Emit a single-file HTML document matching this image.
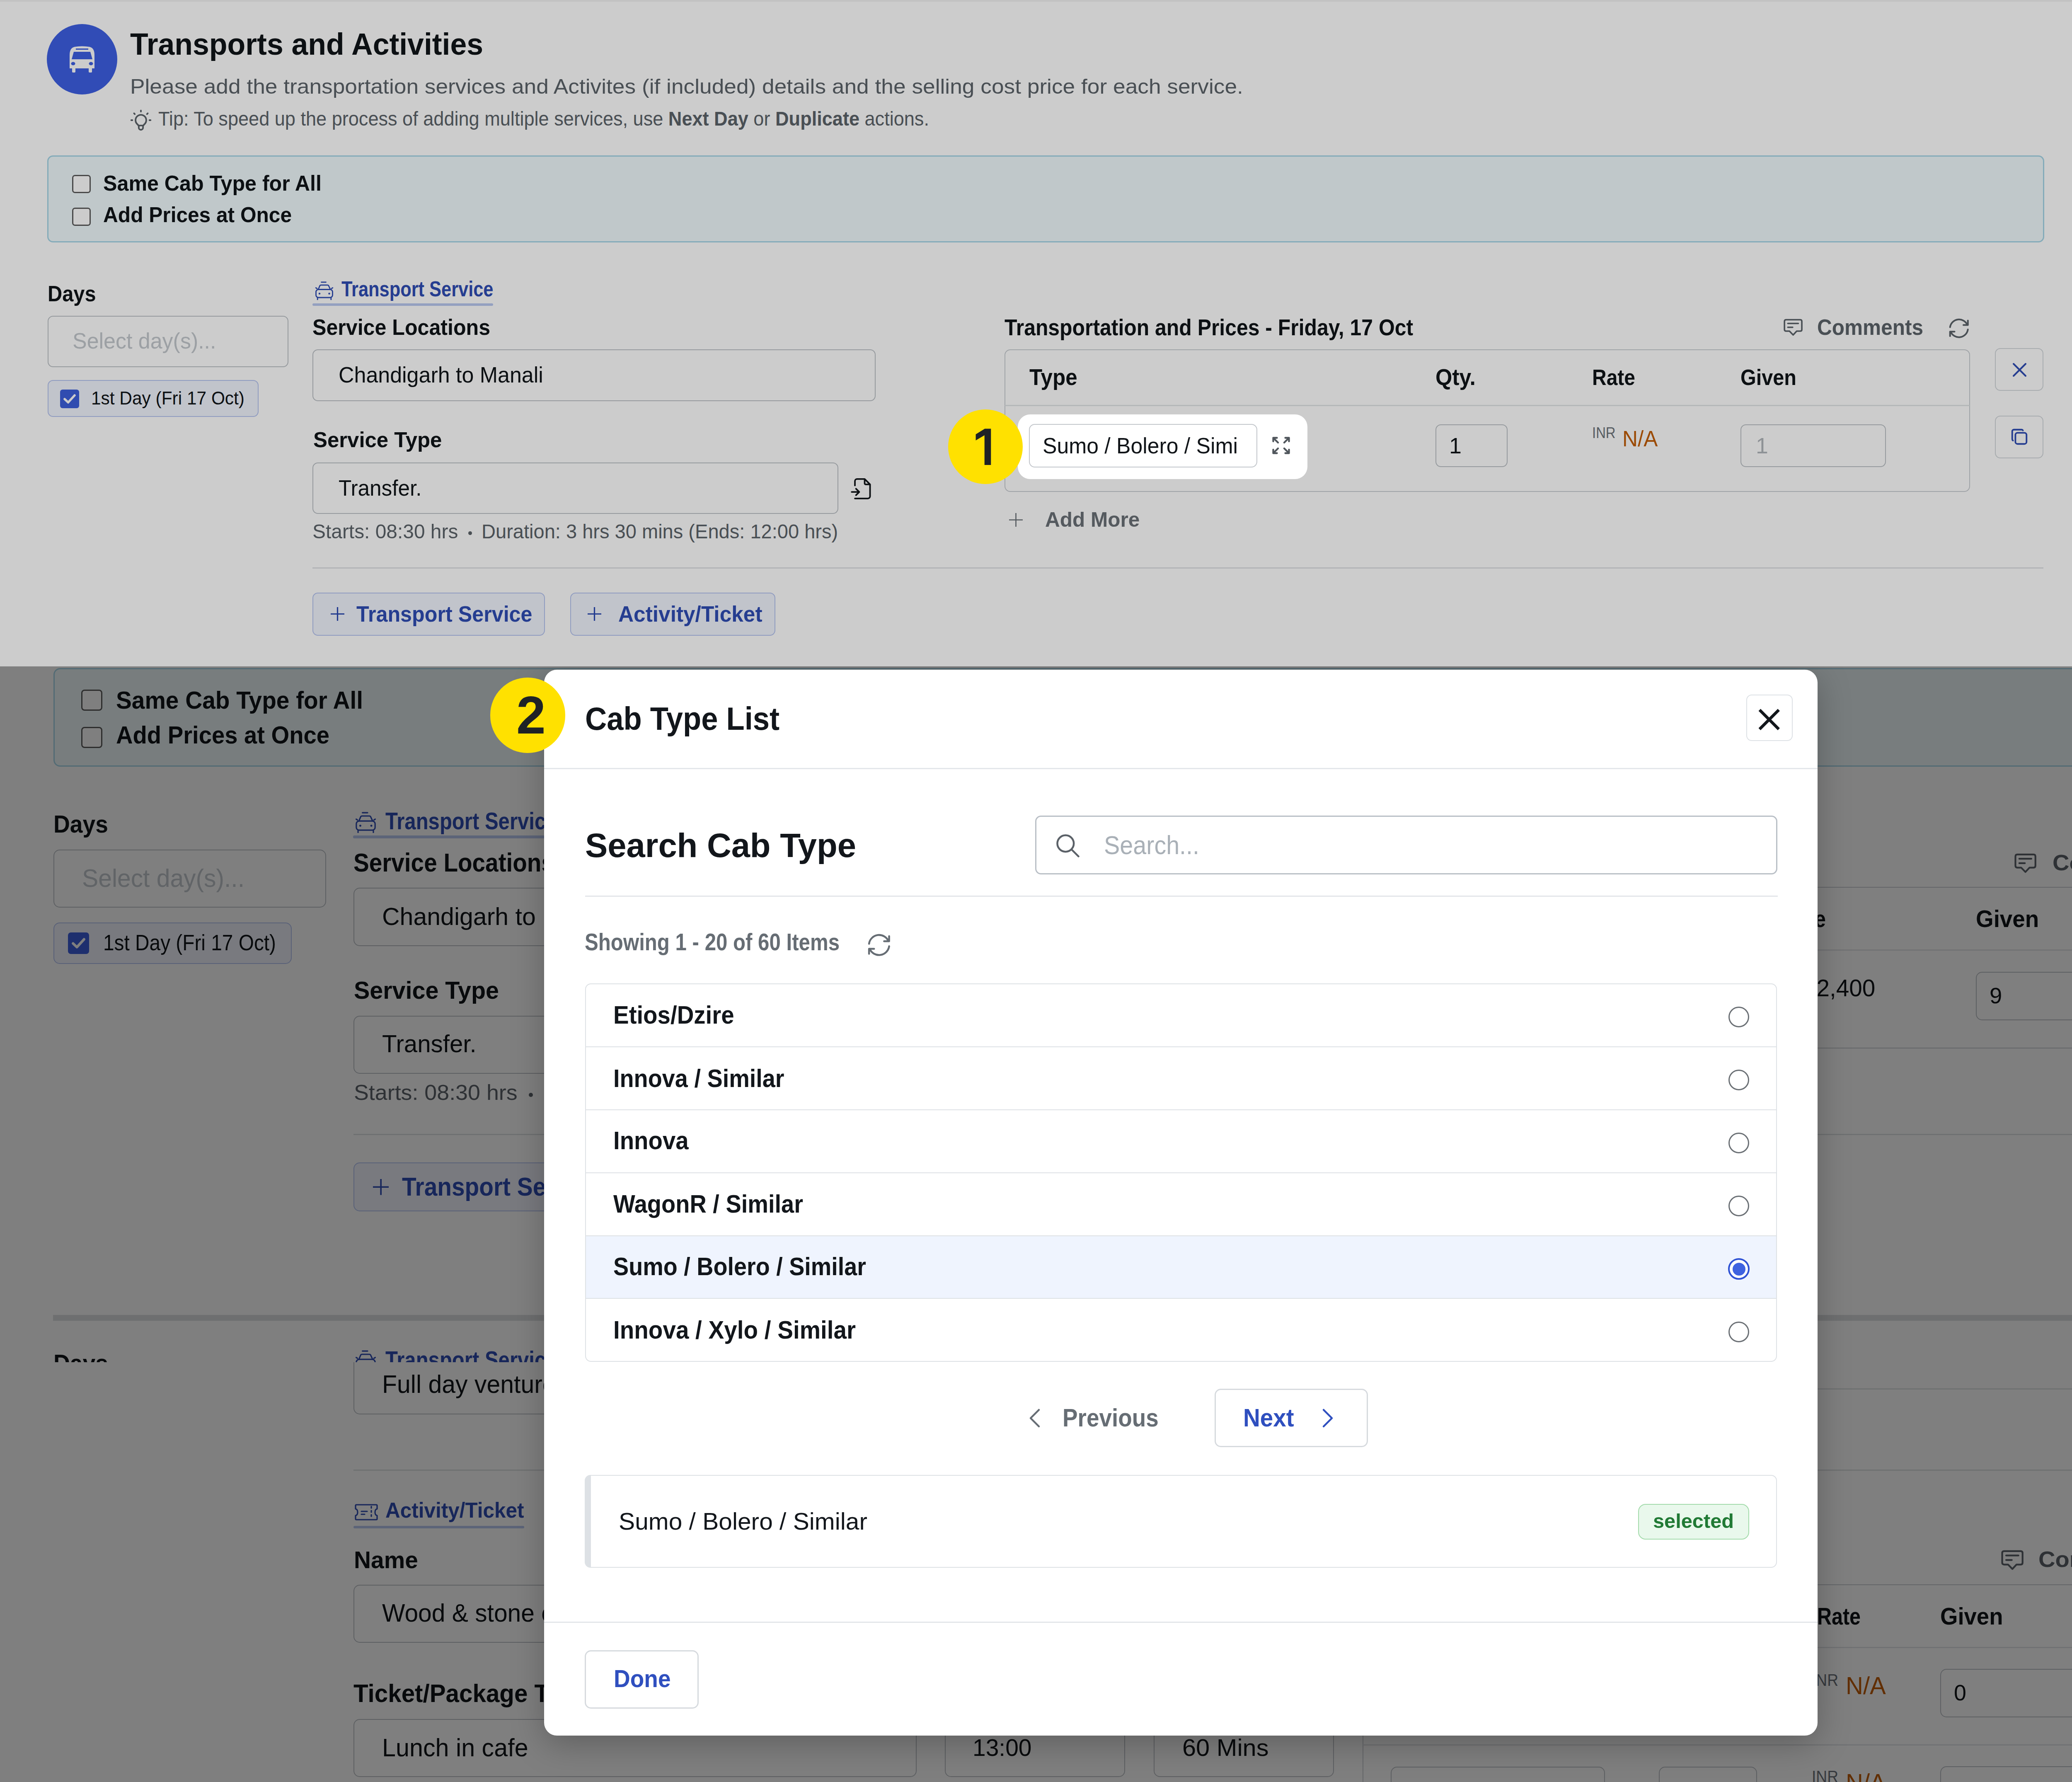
<!DOCTYPE html>
<html><head><meta charset="utf-8"><style>*{margin:0;padding:0;box-sizing:border-box}
html,body{width:5036px;height:4300px;overflow:hidden;background:#fff}
body{position:relative;font-family:"Liberation Sans",sans-serif}
.a{position:absolute}
.t{white-space:nowrap;transform-origin:0 0}
b{font-weight:700}
</style></head><body>
<div class="a" style="left:0;top:0;width:5036px;height:1608px;background:#fff;overflow:hidden">
<div class="a" style="left:0;top:0;width:5036px;height:4px;background:#f3f3f3"></div>
<div class="a" style="left:113px;top:58px;width:170px;height:170px;background:#3e60e4;border-radius:85px;"></div>
<svg class="a" style="left:166px;top:111px;width:64px;height:64px;" viewBox="0 0 64 64" fill="none"><path d="M2 54 V22 C2 10 6 4 14 2 Q32 -1 50 2 C58 4 62 10 62 22 V54 H56 V62 Q56 64 53 64 H51 Q48 64 48 62 V54 H16 V62 Q16 64 13 64 H11 Q8 64 8 62 V54 Z" fill="#fff"/><path d="M17 6 H47 V9 H17 Z M12 14 H52 L57 32 H7 Z" fill="#3e60e4"/><ellipse cx="10.5" cy="42.5" rx="5" ry="4" fill="#3e60e4"/><ellipse cx="53.5" cy="42.5" rx="5" ry="4" fill="#3e60e4"/></svg>
<span class="a t" id="t0" style="transform:scaleX(0.9552);left:314px;top:69.1px;font-size:74.9px;line-height:74.9px;color:#101418;font-weight:700;">Transports and Activities</span>
<span class="a t" id="t1" style="transform:scaleX(1.0635);left:314px;top:183.5px;font-size:50.1px;line-height:50.1px;color:#5c636a;">Please add the transportation services and Activites (if included) details and the selling cost price for each service.</span>
<svg class="a" style="left:308.8px;top:259.3px;width:62px;height:62px;" viewBox="0 0 24 24" fill="none"><path d="M3 12h1m8 -9v1m8 8h1m-15.4 -6.4l.7 .7m12.1 -.7l-.7 .7M9 16a5 5 0 1 1 6 0a3.5 3.5 0 0 0 -1 3a2 2 0 0 1 -4 0a3.5 3.5 0 0 0 -1 -3M9.7 17l4.6 0" stroke="#5c636a" stroke-width="1.5" stroke-linecap="round" stroke-linejoin="round"/></svg>
<span class="a t" id="t2" style="transform:scaleX(0.9557);left:382px;top:262.5px;font-size:47.2px;line-height:47.2px;color:#5c636a;">Tip: To speed up the process of adding multiple services, use <b>Next Day</b> or <b>Duplicate</b> actions.</span>
<div class="a" style="left:114px;top:375px;width:4818.5px;height:210px;background:#f1fafd;border:3.2px solid #a6d6e8;border-radius:14px;"></div>
<div class="a" style="left:174px;top:421.5px;width:45px;height:44.5px;background:#fff;border:3px solid #5a5a5a;border-radius:7px;"></div>
<div class="a" style="left:174px;top:501px;width:45px;height:44px;background:#fff;border:3px solid #5a5a5a;border-radius:7px;"></div>
<span class="a t" id="t3" style="transform:scaleX(0.9860);left:249px;top:417.9px;font-size:50.9px;line-height:50.9px;color:#101418;font-weight:700;">Same Cab Type for All</span>
<span class="a t" id="t4" style="transform:scaleX(0.9488);left:249px;top:491.7px;font-size:52.3px;line-height:52.3px;color:#101418;font-weight:700;">Add Prices at Once</span>
<span class="a t" id="t5" style="transform:scaleX(0.9058);left:115px;top:681.5px;font-size:53.8px;line-height:53.8px;color:#101418;font-weight:700;">Days</span>
<div class="a" style="left:115px;top:762px;width:581px;height:124px;background:#fff;border:2.5px solid #bcc1c6;border-radius:13px;"></div>
<span class="a t" id="t6" style="transform:scaleX(0.9533);left:175px;top:796.3px;font-size:54.5px;line-height:54.5px;color:#c3c8ce;">Select day(s)...</span>
<div class="a" style="left:115px;top:917px;width:509px;height:89px;background:#f2f5fe;border:2.5px solid #b4c3f0;border-radius:13px;"></div>
<div class="a" style="left:145px;top:940px;width:46px;height:45px;background:#3d5fdc;border-radius:6px;"></div>
<svg class="a" style="left:145px;top:940px;width:46px;height:45px;" viewBox="0 0 46 45" fill="none"><path d="M11 23 L19.5 31 L35 14" stroke="#fff" stroke-width="5.5" fill="none" stroke-linecap="round" stroke-linejoin="round"/></svg>
<span class="a t" id="t7" style="transform:scaleX(0.9405);left:220px;top:937.8px;font-size:45.1px;line-height:45.1px;color:#101418;">1st Day (Fri 17 Oct)</span>
<svg class="a" style="left:760px;top:679px;width:45px;height:45px;" viewBox="0 0 45 45" fill="none"><g stroke="#2f4db5" stroke-width="2.8" stroke-linecap="round" stroke-linejoin="round" fill="none"><path d="M15.5 1.8h11"/><path d="M8 19.5 L12 10 Q12.8 8.8 14.5 8.8 H30.5 Q32 8.8 32.8 10 L37 19"/><rect x="2.5" y="19.5" width="40" height="19.5" rx="6"/><path d="M2.2 15.5 L5 17.3 M42.8 15.5 L40 17.3"/><path d="M6.2 39.5 V44 M38.8 39.5 V44"/></g><circle cx="11" cy="29.5" r="2.2" fill="#2f4db5"/><circle cx="34.5" cy="29.5" r="2.2" fill="#2f4db5"/></svg>
<span class="a t" id="t8" style="transform:scaleX(0.8524);left:823.5px;top:672.9px;font-size:50.9px;line-height:50.9px;color:#2f4db5;font-weight:700;">Transport Service</span>
<div class="a" style="left:754px;top:732px;width:436px;height:6px;background:#b9c8f0;border-radius:3px;"></div>
<span class="a t" id="t9" style="transform:scaleX(0.9317);left:754px;top:762.5px;font-size:53.8px;line-height:53.8px;color:#101418;font-weight:700;">Service Locations</span>
<div class="a" style="left:754px;top:843px;width:1359px;height:125px;background:#fff;border:2.5px solid #bcc1c6;border-radius:13px;"></div>
<span class="a t" id="t10" style="transform:scaleX(0.9784);left:817px;top:878.4px;font-size:53.1px;line-height:53.1px;color:#101418;">Chandigarh to Manali</span>
<span class="a t" id="t11" style="transform:scaleX(0.9812);left:756px;top:1036.3px;font-size:51.9px;line-height:51.9px;color:#101418;font-weight:700;">Service Type</span>
<div class="a" style="left:754px;top:1116px;width:1269px;height:124px;background:#fff;border:2.5px solid #bcc1c6;border-radius:13px;"></div>
<span class="a t" id="t12" style="transform:scaleX(0.9666);left:817px;top:1150.8px;font-size:53.1px;line-height:53.1px;color:#101418;">Transfer.</span>
<svg class="a" style="left:2049.6px;top:1148px;width:62.6px;height:62.6px;" viewBox="0 0 24 24" fill="none"><path d="M14 3v4a1 1 0 0 0 1 1h4M5 9v-4a2 2 0 0 1 2 -2h7l5 5v11a2 2 0 0 1 -2 2h-12M2 15h7m-3 -3l3 3l-3 3" stroke="#101418" stroke-width="1.45" stroke-linecap="round" stroke-linejoin="round"/></svg>
<span class="a t" id="t13" style="transform:scaleX(0.9875);left:754px;top:1258.3px;font-size:48.5px;line-height:48.5px;color:#5c636a;">Starts: 08:30 hrs</span>
<div class="a" style="left:1130px;top:1281.5px;width:9px;height:9px;background:#5c636a;border-radius:5px;"></div>
<span class="a t" id="t14" style="transform:scaleX(0.9699);left:1161.8px;top:1258.3px;font-size:48.5px;line-height:48.5px;color:#5c636a;">Duration: 3 hrs 30 mins (Ends: 12:00 hrs)</span>
<div class="a" style="left:754px;top:1369px;width:4177px;height:3px;background:#dfe2e5;"></div>
<div class="a" style="left:754px;top:1430px;width:561px;height:104px;background:#f2f5fe;border:2.5px solid #b4c3f0;border-radius:13px;"></div>
<svg class="a" style="left:798px;top:1465px;width:33px;height:33px;" viewBox="0 0 33 33" fill="none"><path d="M16.5 0V33 M0 16.5H33" stroke="#2f4db5" stroke-width="3.2"/></svg>
<span class="a t" id="t15" style="transform:scaleX(0.9340);left:860px;top:1454.5px;font-size:53.8px;line-height:53.8px;color:#2f4db5;font-weight:700;">Transport Service</span>
<div class="a" style="left:1376px;top:1430px;width:495px;height:104px;background:#f2f5fe;border:2.5px solid #b4c3f0;border-radius:13px;"></div>
<svg class="a" style="left:1418px;top:1465px;width:33px;height:33px;" viewBox="0 0 33 33" fill="none"><path d="M16.5 0V33 M0 16.5H33" stroke="#2f4db5" stroke-width="3.2"/></svg>
<span class="a t" id="t16" style="transform:scaleX(0.9552);left:1491.5px;top:1454.5px;font-size:53.8px;line-height:53.8px;color:#2f4db5;font-weight:700;">Activity/Ticket</span>
<span class="a t" id="t17" style="transform:scaleX(0.9040);left:2423.5px;top:763.2px;font-size:55.2px;line-height:55.2px;color:#101418;font-weight:700;">Transportation and Prices - Friday, 17 Oct</span>
<svg class="a" style="left:4304px;top:769px;width:46px;height:42.1px;" viewBox="0 0 47 43" fill="none"><path d="M14.5 30.7H6.2Q2.2 30.7 2.2 26.7V6.6Q2.2 2.6 6.2 2.6H41Q45 2.6 45 6.6V26.7Q45 30.7 41 30.7H32.3L23.6 40Z M10.5 11.7H36.3M10.5 21.2H22.4" stroke="#5c636a" stroke-width="3.7" stroke-linecap="round" stroke-linejoin="round"/></svg>
<span class="a t" id="t18" style="transform:scaleX(0.9209);left:4385px;top:762.5px;font-size:53.8px;line-height:53.8px;color:#5c636a;font-weight:700;">Comments</span>
<svg class="a" style="left:4695.3px;top:759.5px;width:64.5px;height:64.5px;" viewBox="0 0 24 24" fill="none"><path d="M4 11a8.1 8.1 0 0 1 15.5 -2m.5 -4v4h-4M20 13a8.1 8.1 0 0 1 -15.5 2m-.5 4v-4h4" stroke="#5c636a" stroke-width="1.5" stroke-linecap="round" stroke-linejoin="round"/></svg>
<div class="a" style="left:2424px;top:843px;width:2330px;height:344px;background:#fff;border:2.5px solid #c9cdd2;border-radius:14px;"></div>
<div class="a" style="left:2425px;top:977px;width:2328px;height:2.5px;background:#e2e5e8;"></div>
<span class="a t" id="t19" style="transform:scaleX(0.9135);left:2484px;top:882.1px;font-size:56px;line-height:56px;color:#101418;font-weight:700;">Type</span>
<span class="a t" id="t20" style="transform:scaleX(0.9259);left:3464px;top:882.1px;font-size:56px;line-height:56px;color:#101418;font-weight:700;">Qty.</span>
<span class="a t" id="t21" style="transform:scaleX(0.9036);left:3842px;top:883.6px;font-size:53.1px;line-height:53.1px;color:#101418;font-weight:700;">Rate</span>
<span class="a t" id="t22" style="transform:scaleX(0.9150);left:4200px;top:883.6px;font-size:53.1px;line-height:53.1px;color:#101418;font-weight:700;">Given</span>
<div class="a" style="left:3464px;top:1024px;width:174px;height:103px;background:#fff;border:2.5px solid #bcc1c6;border-radius:13px;"></div>
<span class="a t" id="t23" style="left:3497px;top:1048.5px;font-size:53.8px;line-height:53.8px;color:#101418;">1</span>
<span class="a t" id="t24" style="transform:scaleX(0.8695);left:3842px;top:1026px;font-size:37.8px;line-height:37.8px;color:#6c737a;">INR</span>
<span class="a t" id="t25" style="transform:scaleX(0.9511);left:3914.7px;top:1031.5px;font-size:53.8px;line-height:53.8px;color:#c25d05;">N/A</span>
<div class="a" style="left:4200px;top:1024px;width:351px;height:103px;background:#fff;border:2.5px solid #bcc1c6;border-radius:13px;"></div>
<span class="a t" id="t26" style="left:4237px;top:1048.5px;font-size:53.8px;line-height:53.8px;color:#b2b7bc;">1</span>
<svg class="a" style="left:2435px;top:1238px;width:33px;height:33px;" viewBox="0 0 33 33" fill="none"><path d="M16.5 0V33 M0 16.5H33" stroke="#6b7177" stroke-width="2.6"/></svg>
<span class="a t" id="t27" style="transform:scaleX(0.9848);left:2521.6px;top:1229px;font-size:50.3px;line-height:50.3px;color:#6b7177;font-weight:700;">Add More</span>
<div class="a" style="left:4814px;top:840px;width:117px;height:103px;background:#fff;border:2.5px solid #d3d7db;border-radius:13px;"></div>
<svg class="a" style="left:4857px;top:876px;width:33px;height:33px;" viewBox="0 0 33 33" fill="none"><path d="M2 2L31 31M31 2L2 31" stroke="#2f4db5" stroke-width="4" stroke-linecap="round"/></svg>
<div class="a" style="left:4814px;top:1003px;width:117px;height:103px;background:#fff;border:2.5px solid #d3d7db;border-radius:13px;"></div>
<svg class="a" style="left:4850px;top:1031px;width:46px;height:46px;" viewBox="0 0 24 24" fill="none"><path d="M7 9.667a2.667 2.667 0 0 1 2.667 -2.667h8.666a2.667 2.667 0 0 1 2.667 2.667v8.666a2.667 2.667 0 0 1 -2.667 2.667h-8.666a2.667 2.667 0 0 1 -2.667 -2.667z" stroke="#2f4db5" stroke-width="2"/><path d="M4.012 16.737a2.005 2.005 0 0 1 -1.012 -1.737v-10c0 -1.1 .9 -2 2 -2h10c.75 0 1.158 .385 1.5 1" stroke="#2f4db5" stroke-width="2" stroke-linecap="round"/></svg>
</div>
<div class="a" style="left:0;top:0;width:5036px;height:1608px;background:rgba(0,0,0,0.2)"></div>
<div class="a" style="left:2456px;top:1000px;width:699px;height:156px;background:#fff;border-radius:30px;"></div>
<div class="a" style="left:2483px;top:1023px;width:551px;height:105px;background:#fff;border:2.5px solid #c2c6cb;border-radius:14px;"></div>
<span class="a t" id="t28" style="transform:scaleX(0.9606);left:2516px;top:1048.5px;font-size:53.8px;line-height:53.8px;color:#101418;">Sumo / Bolero / Simi</span>
<svg class="a" style="left:3070px;top:1054px;width:43px;height:42px;" viewBox="0 0 43 42" fill="none"><g stroke="#50565c" stroke-width="4.3" stroke-linecap="round" stroke-linejoin="round" fill="none"><path d="M2.5 11V2.5H11.5M2.5 2.5L14 14M31.5 2.5H40.5V11M40.5 2.5L29 14M2.5 31V39.5H11.5M2.5 39.5L14 28M40.5 31V39.5H31.5M40.5 39.5L29 28"/></g></svg>
<div class="a" style="left:2287.8px;top:987.8px;width:180px;height:180px;background:#ffe100;border-radius:90px;"></div>
<svg class="a" style="left:0px;top:0px;width:5036px;height:1608px;" viewBox="0 0 5036 1608" fill="none"><path d="M2376.4 1034.4H2391.3V1122H2375.7V1050.2L2354.6 1062.7V1048.1Z" fill="#1e2226"/></svg>
<div class="a" style="left:0;top:1608px;width:5036px;height:2692px;background:#fff;overflow:hidden"><div class="a" style="left:0;top:-1608px;width:5036px;height:4300px">
<div class="a" style="left:129px;top:1611.5px;width:4971px;height:238.5px;background:#f1fafd;border:3.6px solid #a6d6e8;border-radius:16px;"></div>
<div class="a" style="left:196px;top:1664px;width:51px;height:51px;background:#fff;border:3.5px solid #5a5a5a;border-radius:8px;"></div>
<div class="a" style="left:196px;top:1754px;width:51px;height:51px;background:#fff;border:3.5px solid #5a5a5a;border-radius:8px;"></div>
<span class="a t" id="t29" style="transform:scaleX(0.9522);left:280px;top:1659.5px;font-size:59.6px;line-height:59.6px;color:#101418;font-weight:700;">Same Cab Type for All</span>
<span class="a t" id="t30" style="transform:scaleX(0.9424);left:280px;top:1743.5px;font-size:59.6px;line-height:59.6px;color:#101418;font-weight:700;">Add Prices at Once</span>
<span class="a t" id="t31" style="transform:scaleX(0.9471);left:129px;top:1960.3px;font-size:58.3px;line-height:58.3px;color:#101418;font-weight:700;">Days</span>
<div class="a" style="left:129px;top:2050px;width:658px;height:140px;background:#fff;border:2.8px solid #bcc1c6;border-radius:15px;"></div>
<span class="a t" id="t32" style="transform:scaleX(0.9636);left:197.5px;top:2089.3px;font-size:61px;line-height:61px;color:#c3c8ce;">Select day(s)...</span>
<div class="a" style="left:129px;top:2226px;width:575px;height:100px;background:#f2f5fe;border:2.8px solid #b4c3f0;border-radius:15px;"></div>
<div class="a" style="left:164px;top:2250px;width:51px;height:52px;background:#3d5fdc;border-radius:7px;"></div>
<svg class="a" style="left:164px;top:2250px;width:51px;height:52px;" viewBox="0 0 46 45" fill="none"><path d="M11 23 L19.5 31 L35 14" stroke="#fff" stroke-width="5.5" fill="none" stroke-linecap="round" stroke-linejoin="round"/></svg>
<span class="a t" id="t33" style="transform:scaleX(0.8885);left:248.5px;top:2247.5px;font-size:53.8px;line-height:53.8px;color:#101418;">1st Day (Fri 17 Oct)</span>
<svg class="a" style="left:857px;top:1959px;width:51px;height:51px;" viewBox="0 0 45 45" fill="none"><g stroke="#2f4db5" stroke-width="2.8" stroke-linecap="round" stroke-linejoin="round" fill="none"><path d="M15.5 1.8h11"/><path d="M8 19.5 L12 10 Q12.8 8.8 14.5 8.8 H30.5 Q32 8.8 32.8 10 L37 19"/><rect x="2.5" y="19.5" width="40" height="19.5" rx="6"/><path d="M2.2 15.5 L5 17.3 M42.8 15.5 L40 17.3"/><path d="M6.2 39.5 V44 M38.8 39.5 V44"/></g><circle cx="11" cy="29.5" r="2.2" fill="#2f4db5"/><circle cx="34.5" cy="29.5" r="2.2" fill="#2f4db5"/></svg>
<span class="a t" id="t34" style="transform:scaleX(0.8445);left:930px;top:1951.8px;font-size:58.1px;line-height:58.1px;color:#2f4db5;font-weight:700;">Transport Service</span>
<div class="a" style="left:852px;top:2016px;width:493px;height:6.5px;background:#b9c8f0;border-radius:3px;"></div>
<span class="a t" id="t35" style="transform:scaleX(0.9066);left:853px;top:2050.1px;font-size:62.5px;line-height:62.5px;color:#101418;font-weight:700;">Service Locations</span>
<div class="a" style="left:853px;top:2141.5px;width:1537px;height:141.5px;background:#fff;border:2.8px solid #bcc1c6;border-radius:15px;"></div>
<span class="a t" id="t36" style="transform:scaleX(0.9903);left:922px;top:2181.5px;font-size:59.6px;line-height:59.6px;color:#101418;">Chandigarh to Manali</span>
<span class="a t" id="t37" style="transform:scaleX(0.9634);left:854px;top:2359.5px;font-size:59.6px;line-height:59.6px;color:#101418;font-weight:700;">Service Type</span>
<div class="a" style="left:853px;top:2450.5px;width:1435px;height:140.5px;background:#fff;border:2.8px solid #bcc1c6;border-radius:15px;"></div>
<span class="a t" id="t38" style="transform:scaleX(0.9727);left:922.3px;top:2488.8px;font-size:59.9px;line-height:59.9px;color:#101418;">Transfer.</span>
<span class="a t" id="t39" style="transform:scaleX(1.0568);left:854px;top:2611.9px;font-size:50.9px;line-height:50.9px;color:#5c636a;">Starts: 08:30 hrs</span>
<div class="a" style="left:1276px;top:2637px;width:10px;height:10px;background:#5c636a;border-radius:5px;"></div>
<span class="a t" id="t40" style="transform:scaleX(1.0456);left:1317px;top:2611.9px;font-size:50.9px;line-height:50.9px;color:#5c636a;">Duration: 3 hrs 30 mins (Ends: 12:00 hrs)</span>
<div class="a" style="left:853px;top:2736px;width:4247px;height:3px;background:#dfe2e5;"></div>
<div class="a" style="left:853px;top:2805px;width:635px;height:118px;background:#f2f5fe;border:2.8px solid #b4c3f0;border-radius:15px;"></div>
<svg class="a" style="left:899.5px;top:2845px;width:38.5px;height:38.5px;" viewBox="0 0 38.5 38.5" fill="none"><path d="M19.2 0V38.5 M0 19.2H38.5" stroke="#2f4db5" stroke-width="3.6"/></svg>
<span class="a t" id="t41" style="transform:scaleX(0.9150);left:969.6px;top:2833.2px;font-size:62.1px;line-height:62.1px;color:#2f4db5;font-weight:700;">Transport Service</span>
<div class="a" style="left:128px;top:3172.5px;width:4972px;height:14.5px;background:#dcdee1;"></div>
<div class="a" style="left:0;top:0;width:5036px;height:4300px;clip-path:inset(0 0 1013px 0)">
<span class="a t" id="t42" style="transform:scaleX(0.9265);left:129px;top:3259.5px;font-size:59.6px;line-height:59.6px;color:#101418;font-weight:700;">Days</span>
<svg class="a" style="left:857px;top:3258px;width:51px;height:51px;" viewBox="0 0 45 45" fill="none"><g stroke="#2f4db5" stroke-width="2.8" stroke-linecap="round" stroke-linejoin="round" fill="none"><path d="M15.5 1.8h11"/><path d="M8 19.5 L12 10 Q12.8 8.8 14.5 8.8 H30.5 Q32 8.8 32.8 10 L37 19"/><rect x="2.5" y="19.5" width="40" height="19.5" rx="6"/><path d="M2.2 15.5 L5 17.3 M42.8 15.5 L40 17.3"/><path d="M6.2 39.5 V44 M38.8 39.5 V44"/></g><circle cx="11" cy="29.5" r="2.2" fill="#2f4db5"/><circle cx="34.5" cy="29.5" r="2.2" fill="#2f4db5"/></svg>
<span class="a t" id="t43" style="transform:scaleX(0.8445);left:930px;top:3251.8px;font-size:58.1px;line-height:58.1px;color:#2f4db5;font-weight:700;">Transport Service</span>
</div>
<div class="a" style="left:853px;top:3270px;width:1537px;height:143px;background:#fff;border:2.8px solid #bcc1c6;border-radius:15px;clip-path:inset(17px 0 0 0);"></div>
<span class="a t" id="t44" style="transform:scaleX(0.9750);left:922px;top:3310.4px;font-size:60.5px;line-height:60.5px;color:#101418;">Full day venture to Solang Valley</span>
<div class="a" style="left:853px;top:3546px;width:4247px;height:3px;background:#dfe2e5;"></div>
<div class="a" style="left:2750px;top:3350px;width:2350px;height:3px;background:#dfe2e5;"></div>
<svg class="a" style="left:856px;top:3629px;width:56px;height:40px;" viewBox="0 0 56 40" fill="none"><g stroke="#2f4db5" stroke-width="3.2" stroke-linecap="round" stroke-linejoin="round" fill="none"><path d="M4 2H52Q54 2 54 4V12Q49 13 49 20Q49 27 54 28V36Q54 38 52 38H4Q2 38 2 36V28Q7 27 7 20Q7 13 2 12V4Q2 2 4 2Z"/><path d="M40 6V10M40 16V20M40 26V30M16 18H30M16 25H24"/></g></svg>
<span class="a t" id="t45" style="transform:scaleX(0.9590);left:930px;top:3618.8px;font-size:51.6px;line-height:51.6px;color:#2f4db5;font-weight:700;">Activity/Ticket</span>
<div class="a" style="left:853px;top:3682px;width:412px;height:6px;background:#b9c8f0;border-radius:3px;"></div>
<span class="a t" id="t46" style="transform:scaleX(0.9833);left:853.7px;top:3735.8px;font-size:57.8px;line-height:57.8px;color:#101418;font-weight:700;">Name</span>
<div class="a" style="left:853px;top:3824px;width:1537px;height:140px;background:#fff;border:2.8px solid #bcc1c6;border-radius:15px;"></div>
<span class="a t" id="t47" style="transform:scaleX(0.9760);left:922px;top:3863.1px;font-size:60.2px;line-height:60.2px;color:#101418;">Wood &amp; stone carving workshop</span>
<span class="a t" id="t48" style="transform:scaleX(0.9640);left:853px;top:4056.4px;font-size:60.5px;line-height:60.5px;color:#101418;font-weight:700;">Ticket/Package Type</span>
<div class="a" style="left:853px;top:4148px;width:1359px;height:140px;background:#fff;border:2.8px solid #bcc1c6;border-radius:15px;"></div>
<span class="a t" id="t49" style="transform:scaleX(0.9797);left:922px;top:4187px;font-size:60.5px;line-height:60.5px;color:#101418;">Lunch in cafe</span>
<div class="a" style="left:2280px;top:4100px;width:435px;height:188px;background:#fff;border:2.8px solid #bcc1c6;border-radius:15px;"></div>
<span class="a t" id="t50" style="transform:scaleX(1.0045);left:2346.5px;top:4190px;font-size:56.7px;line-height:56.7px;color:#101418;">13:00</span>
<div class="a" style="left:2784px;top:4100px;width:435px;height:188px;background:#fff;border:2.8px solid #bcc1c6;border-radius:15px;"></div>
<span class="a t" id="t51" style="transform:scaleX(1.0504);left:2852.5px;top:4190px;font-size:56.7px;line-height:56.7px;color:#101418;">60 Mins</span>
<svg class="a" style="left:4861px;top:2059px;width:53px;height:48.5px;" viewBox="0 0 47 43" fill="none"><path d="M14.5 30.7H6.2Q2.2 30.7 2.2 26.7V6.6Q2.2 2.6 6.2 2.6H41Q45 2.6 45 6.6V26.7Q45 30.7 41 30.7H32.3L23.6 40Z M10.5 11.7H36.3M10.5 21.2H22.4" stroke="#5c636a" stroke-width="3.7" stroke-linecap="round" stroke-linejoin="round"/></svg>
<span class="a t" id="t52" style="transform:scaleX(1.0432);left:4952.7px;top:2054.5px;font-size:53.8px;line-height:53.8px;color:#5c636a;font-weight:700;">Comments</span>
<div class="a" style="left:2750px;top:2140px;width:2350px;height:390px;background:#fff;border:2.8px solid #c9cdd2;border-radius:16px;"></div>
<div class="a" style="left:2751px;top:2291px;width:2349px;height:2.5px;background:#e2e5e8;"></div>
<span class="a t" id="t53" style="transform:scaleX(0.8577);left:4298px;top:2187.8px;font-size:58.1px;line-height:58.1px;color:#101418;font-weight:700;">Rate</span>
<span class="a t" id="t54" style="transform:scaleX(0.9434);left:4767.5px;top:2187.8px;font-size:58.1px;line-height:58.1px;color:#101418;font-weight:700;">Given</span>
<span class="a t" id="t55" style="left:4270px;top:2357px;font-size:56.7px;line-height:56.7px;color:#101418;">INR 2,400</span>
<div class="a" style="left:4767.5px;top:2345px;width:432.5px;height:117px;background:#fff;border:2.8px solid #bcc1c6;border-radius:15px;"></div>
<span class="a t" id="t56" style="left:4801px;top:2376.4px;font-size:54.4px;line-height:54.4px;color:#101418;">9</span>
<svg class="a" style="left:4829px;top:3740px;width:54px;height:49.4px;" viewBox="0 0 47 43" fill="none"><path d="M14.5 30.7H6.2Q2.2 30.7 2.2 26.7V6.6Q2.2 2.6 6.2 2.6H41Q45 2.6 45 6.6V26.7Q45 30.7 41 30.7H32.3L23.6 40Z M10.5 11.7H36.3M10.5 21.2H22.4" stroke="#5c636a" stroke-width="3.7" stroke-linecap="round" stroke-linejoin="round"/></svg>
<span class="a t" id="t57" style="transform:scaleX(1.0432);left:4919px;top:3735.5px;font-size:53.8px;line-height:53.8px;color:#5c636a;font-weight:700;">Comments</span>
<div class="a" style="left:3288px;top:3823px;width:1812px;height:577px;background:#fff;border:2.8px solid #c9cdd2;border-radius:16px;"></div>
<div class="a" style="left:3289px;top:3974px;width:1811px;height:2.5px;background:#e2e5e8;"></div>
<div class="a" style="left:3289px;top:4209px;width:1811px;height:2.5px;background:#e2e5e8;"></div>
<span class="a t" id="t58" style="transform:scaleX(0.8411);left:4385px;top:3871.9px;font-size:57.6px;line-height:57.6px;color:#101418;font-weight:700;">Rate</span>
<span class="a t" id="t59" style="transform:scaleX(0.9466);left:4681.5px;top:3871.9px;font-size:57.6px;line-height:57.6px;color:#101418;font-weight:700;">Given</span>
<span class="a t" id="t60" style="transform:scaleX(0.9133);left:4372px;top:4033.5px;font-size:40.7px;line-height:40.7px;color:#6c737a;">INR</span>
<span class="a t" id="t61" style="transform:scaleX(0.9744);left:4453.7px;top:4037.5px;font-size:59.6px;line-height:59.6px;color:#c25d05;">N/A</span>
<div class="a" style="left:4681.5px;top:4027px;width:518.5px;height:117px;background:#fff;border:2.8px solid #bcc1c6;border-radius:15px;"></div>
<span class="a t" id="t62" style="left:4715px;top:4057.5px;font-size:53.8px;line-height:53.8px;color:#101418;">0</span>
<div class="a" style="left:3356px;top:4263px;width:517px;height:137px;background:#fff;border:2.8px solid #bcc1c6;border-radius:15px;"></div>
<div class="a" style="left:4003px;top:4263px;width:237px;height:137px;background:#fff;border:2.8px solid #bcc1c6;border-radius:15px;"></div>
<div class="a" style="left:4681.5px;top:4262px;width:518.5px;height:138px;background:#fff;border:2.8px solid #bcc1c6;border-radius:15px;"></div>
<span class="a t" id="t63" style="transform:scaleX(0.9133);left:4372px;top:4266.5px;font-size:40.7px;line-height:40.7px;color:#6c737a;">INR</span>
<span class="a t" id="t64" style="transform:scaleX(0.9744);left:4453.7px;top:4271.5px;font-size:59.6px;line-height:59.6px;color:#c25d05;">N/A</span>
</div></div>
<div class="a" style="left:0;top:1608px;width:5036px;height:2692px;background:rgba(0,0,0,0.5)"></div>
<div class="a" style="left:0;top:0;width:5036px;height:4300px;clip-path:inset(1608px 0 0 0)">
<div class="a" style="left:1313px;top:1615.5px;width:3073px;height:2572px;background:#fff;border-radius:31px;box-shadow:0 20px 80px rgba(0,0,0,0.25);"></div>
</div>
<div class="a" style="left:1183px;top:1635px;width:180.5px;height:181.5px;background:#ffe100;border-radius:90.2px;"></div>
<span class="a t" id="t65" style="left:1246px;top:1663.3px;font-size:127.2px;line-height:127.2px;color:#1e2226;font-weight:700;">2</span>
<span class="a t" id="t66" style="transform:scaleX(0.9268);left:1411.8px;top:1694.6px;font-size:78.1px;line-height:78.1px;color:#12161b;font-weight:700;">Cab Type List</span>
<div class="a" style="left:4214px;top:1676px;width:112px;height:112px;background:#fff;border:2.5px solid #dde1e5;border-radius:13px;"></div>
<svg class="a" style="left:4242.5px;top:1709.7px;width:52.5px;height:52.7px;" viewBox="0 0 52 52" fill="none"><path d="M3 3L49 49M49 3L3 49" stroke="#12161b" stroke-width="7" stroke-linecap="butt"/></svg>
<div class="a" style="left:1313px;top:1852.5px;width:3073px;height:3px;background:#e3e6ea;"></div>
<span class="a t" id="t67" style="transform:scaleX(1.0005);left:1412px;top:1998.7px;font-size:81.3px;line-height:81.3px;color:#12161b;font-weight:700;">Search Cab Type</span>
<div class="a" style="left:2498px;top:1968px;width:1791px;height:142px;background:#fff;border:3px solid #b9bfc6;border-radius:14px;"></div>
<svg class="a" style="left:2543px;top:2007px;width:68px;height:68px;" viewBox="0 0 24 24" fill="none"><path d="M10 10m-7 0a7 7 0 1 0 14 0a7 7 0 1 0 -14 0M21 21l-6 -6" stroke="#5b6168" stroke-width="1.6" stroke-linecap="round" stroke-linejoin="round"/></svg>
<span class="a t" id="t68" style="transform:scaleX(0.9109);left:2663.5px;top:2008px;font-size:63.1px;line-height:63.1px;color:#a9b0b7;">Search...</span>
<div class="a" style="left:1412px;top:2161px;width:2878px;height:3px;background:#e3e6ea;"></div>
<span class="a t" id="t69" style="transform:scaleX(0.8677);left:1411px;top:2246px;font-size:56.7px;line-height:56.7px;color:#666d74;font-weight:700;">Showing 1 - 20 of 60 Items</span>
<svg class="a" style="left:2085.2px;top:2243.5px;width:72.7px;height:72.7px;" viewBox="0 0 24 24" fill="none"><path d="M4 11a8.1 8.1 0 0 1 15.5 -2m.5 -4v4h-4M20 13a8.1 8.1 0 0 1 -15.5 2m-.5 4v-4h4" stroke="#666d74" stroke-width="1.5" stroke-linecap="round" stroke-linejoin="round"/></svg>
<div class="a" style="left:1411.5px;top:2372.5px;width:2876.5px;height:913.5px;background:#fff;border:2.5px solid #dde1e5;border-radius:14px;"></div>
<div class="a" style="left:1414px;top:2982px;width:2871.5px;height:151px;background:#eff4fe;"></div>
<div class="a" style="left:1414px;top:2524.8px;width:2871.5px;height:2.5px;background:#dde1e5;"></div>
<div class="a" style="left:1414px;top:2676.8px;width:2871.5px;height:2.5px;background:#dde1e5;"></div>
<div class="a" style="left:1414px;top:2828.8px;width:2871.5px;height:2.5px;background:#dde1e5;"></div>
<div class="a" style="left:1414px;top:2980.8px;width:2871.5px;height:2.5px;background:#dde1e5;"></div>
<div class="a" style="left:1414px;top:3131.8px;width:2871.5px;height:2.5px;background:#dde1e5;"></div>
<span class="a t" id="t70" style="transform:scaleX(0.9250);left:1480px;top:2419.3px;font-size:61px;line-height:61px;color:#12161b;font-weight:700;">Etios/Dzire</span>
<span class="a t" id="t71" style="transform:scaleX(0.9151);left:1480px;top:2571.8px;font-size:61px;line-height:61px;color:#12161b;font-weight:700;">Innova / Similar</span>
<span class="a t" id="t72" style="transform:scaleX(0.9237);left:1480px;top:2722.3px;font-size:61px;line-height:61px;color:#12161b;font-weight:700;">Innova</span>
<span class="a t" id="t73" style="transform:scaleX(0.9172);left:1480px;top:2875.3px;font-size:61px;line-height:61px;color:#12161b;font-weight:700;">WagonR / Similar</span>
<span class="a t" id="t74" style="transform:scaleX(0.9135);left:1480px;top:3026.3px;font-size:61px;line-height:61px;color:#12161b;font-weight:700;">Sumo / Bolero / Similar</span>
<span class="a t" id="t75" style="transform:scaleX(0.9278);left:1480px;top:3179.3px;font-size:61px;line-height:61px;color:#12161b;font-weight:700;">Innova / Xylo / Similar</span>
<div class="a" style="left:4171px;top:2429px;width:50px;height:50px;background:#fff;border:3px solid #6a6f74;border-radius:25px;"></div>
<div class="a" style="left:4171px;top:2581px;width:50px;height:50px;background:#fff;border:3px solid #6a6f74;border-radius:25px;"></div>
<div class="a" style="left:4171px;top:2733px;width:50px;height:50px;background:#fff;border:3px solid #6a6f74;border-radius:25px;"></div>
<div class="a" style="left:4171px;top:2885px;width:50px;height:50px;background:#fff;border:3px solid #6a6f74;border-radius:25px;"></div>
<div class="a" style="left:4170px;top:3036px;width:52px;height:52px;background:#fff;border:4.2px solid #2f52d4;border-radius:26px;"></div>
<div class="a" style="left:4180.5px;top:3046.5px;width:31px;height:31px;background:#3f63e0;border-radius:15.5px;"></div>
<div class="a" style="left:4171px;top:3189px;width:50px;height:50px;background:#fff;border:3px solid #6a6f74;border-radius:25px;"></div>
<svg class="a" style="left:2480px;top:3398px;width:34px;height:48px;" viewBox="0 0 34 48" fill="none"><path d="M27 4L7 24L27 44" stroke="#666d74" stroke-width="4.5" fill="none" stroke-linecap="round" stroke-linejoin="round"/></svg>
<span class="a t" id="t76" style="transform:scaleX(0.8905);left:2564px;top:3390.2px;font-size:61.6px;line-height:61.6px;color:#666d74;font-weight:700;">Previous</span>
<div class="a" style="left:2931px;top:3351px;width:370px;height:141px;background:#fff;border:3px solid #d6dade;border-radius:15px;"></div>
<span class="a t" id="t77" style="transform:scaleX(0.9175);left:3000px;top:3390.2px;font-size:61.6px;line-height:61.6px;color:#2f4fbf;font-weight:700;">Next</span>
<svg class="a" style="left:3187px;top:3398px;width:34px;height:48px;" viewBox="0 0 34 48" fill="none"><path d="M7 4L27 24L7 44" stroke="#2f4fbf" stroke-width="4.5" fill="none" stroke-linecap="round" stroke-linejoin="round"/></svg>
<div class="a" style="left:1411px;top:3559px;width:2877px;height:223.5px;background:#fff;border:2.5px solid #dde1e5;border-radius:14px;border-left:15px solid #dde1e5;"></div>
<span class="a t" id="t78" style="transform:scaleX(1.0100);left:1492.5px;top:3642.3px;font-size:58.1px;line-height:58.1px;color:#12161b;">Sumo / Bolero / Similar</span>
<div class="a" style="left:3953px;top:3629px;width:268px;height:85.5px;background:#e9f8ec;border:2.5px solid #a3dbab;border-radius:18px;"></div>
<span class="a t" id="t79" style="transform:scaleX(1.0150);left:3989px;top:3646.9px;font-size:48px;line-height:48px;color:#217a35;font-weight:700;">selected</span>
<div class="a" style="left:1313px;top:3912.5px;width:3073px;height:3px;background:#e3e6ea;"></div>
<div class="a" style="left:1411px;top:3981.5px;width:275px;height:141px;background:#fff;border:3px solid #d6dade;border-radius:15px;"></div>
<span class="a t" id="t80" style="transform:scaleX(0.9339);left:1481px;top:4021.7px;font-size:58.9px;line-height:58.9px;color:#2f4fbf;font-weight:700;">Done</span>
</body></html>
